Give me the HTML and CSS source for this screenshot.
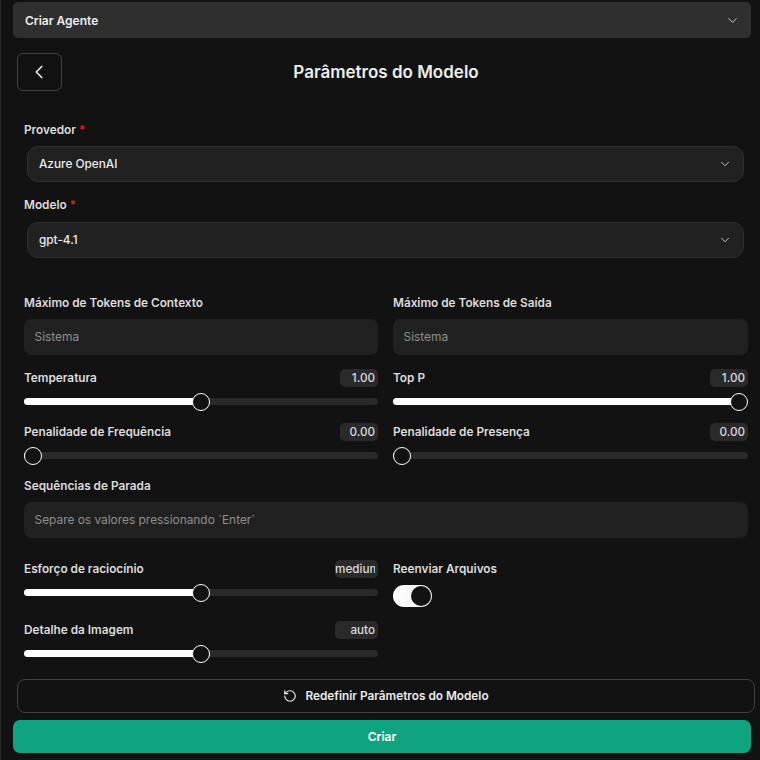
FILE: index.html
```html
<!DOCTYPE html>
<html lang="pt-BR">
<head>
    <meta charset="UTF-8">
    <meta name="viewport" content="width=device-width, initial-scale=1.0">
    <title>Parâmetros do Modelo</title>
    <link rel="stylesheet" href="styles.css">
</head>
<body>
    <div class="page">
        <div class="agent-bar">
            <span>Criar Agente</span>
            <svg class="chevron" viewBox="0 0 24 24"><path d="m6 9 6 6 6-6"/></svg>
        </div>

        <div class="panel">
            <div class="panel-header">
                <button class="back-button">
                    <svg class="back-icon" viewBox="0 0 24 24"><path d="m15 18-6-6 6-6"/></svg>
                </button>
                <div class="panel-title">Parâmetros do Modelo</div>
            </div>

            <div class="form">
                <div class="label label-first">Provedor <span class="required">*</span></div>
                <div class="select">
                    <span>Azure OpenAI</span>
                    <svg class="chevron" viewBox="0 0 24 24"><path d="m6 9 6 6 6-6"/></svg>
                </div>
                <div class="label label-second">Modelo <span class="required">*</span></div>
                <div class="select">
                    <span>gpt-4.1</span>
                    <svg class="chevron" viewBox="0 0 24 24"><path d="m6 9 6 6 6-6"/></svg>
                </div>

                <div class="params">
                    <div>
                        <div class="label">Máximo de Tokens de Contexto</div>
                        <div class="input">Sistema</div>
                    </div>
                    <div>
                        <div class="label">Máximo de Tokens de Saída</div>
                        <div class="input">Sistema</div>
                    </div>

                    <div class="param">
                        <div class="param-head">
                            <div class="label">Temperatura</div>
                            <div class="badge"><span>1.00</span></div>
                        </div>
                        <div class="slider" style="--value:0.5"><div class="slider-fill"></div><div class="slider-thumb"></div></div>
                    </div>
                    <div class="param">
                        <div class="param-head">
                            <div class="label">Top P</div>
                            <div class="badge"><span>1.00</span></div>
                        </div>
                        <div class="slider" style="--value:1"><div class="slider-fill"></div><div class="slider-thumb"></div></div>
                    </div>

                    <div class="param">
                        <div class="param-head">
                            <div class="label">Penalidade de Frequência</div>
                            <div class="badge"><span>0.00</span></div>
                        </div>
                        <div class="slider" style="--value:0"><div class="slider-fill"></div><div class="slider-thumb"></div></div>
                    </div>
                    <div class="param">
                        <div class="param-head">
                            <div class="label">Penalidade de Presença</div>
                            <div class="badge"><span>0.00</span></div>
                        </div>
                        <div class="slider" style="--value:0"><div class="slider-fill"></div><div class="slider-thumb"></div></div>
                    </div>

                    <div class="wide">
                        <div class="label">Sequências de Parada</div>
                        <div class="input">Separe os valores pressionando `Enter`</div>
                    </div>

                    <div class="param">
                        <div class="param-head">
                            <div class="label">Esforço de raciocínio</div>
                            <div class="badge badge-text"><span>medium</span></div>
                        </div>
                        <div class="slider" style="--value:0.5"><div class="slider-fill"></div><div class="slider-thumb"></div></div>
                    </div>
                    <div class="param-toggle">
                        <div class="param-head">
                            <div class="label">Reenviar Arquivos</div>
                        </div>
                        <div class="toggle"><div class="toggle-thumb"></div></div>
                    </div>

                    <div class="param">
                        <div class="param-head">
                            <div class="label">Detalhe da Imagem</div>
                            <div class="badge badge-text"><span>auto</span></div>
                        </div>
                        <div class="slider" style="--value:0.5"><div class="slider-fill"></div><div class="slider-thumb"></div></div>
                    </div>
                </div>
            </div>

            <button class="reset-button">
                <svg class="reset-icon" viewBox="0 0 24 24"><path d="M3 12a9 9 0 1 0 9-9 9.75 9.75 0 0 0-6.74 2.74L3 8"/><path d="M3 3v5h5"/></svg>
                Redefinir Parâmetros do Modelo
            </button>
        </div>

        <button class="create-button">Criar</button>
    </div>
</body>
</html>
```
FILE: styles.css
```css
* {
    box-sizing: border-box;
}
body {
    font-family: Inter, "Liberation Sans", sans-serif;
    background-color: #121212;
    color: #ececec;
    margin: 0;
    height: 760px;
    overflow: hidden;
    border-left: 1px solid #2a2a2a;
}
button {
    font-family: inherit;
    color: inherit;
    background: none;
    cursor: pointer;
}
svg {
    fill: none;
    stroke: currentColor;
    stroke-width: 2;
    stroke-linecap: round;
    stroke-linejoin: round;
    flex-shrink: 0;
}
.page {
    padding: 2px 9px 0 12px;
}
.agent-bar {
    display: flex;
    align-items: center;
    justify-content: space-between;
    height: 36px;
    padding: 0 11px 0 12px;
    background-color: #2f2f2f;
    border-radius: 5px;
    font-size: 12px;
    font-weight: 600;
}
.chevron {
    width: 14px;
    height: 14px;
    stroke-width: 1.6;
    color: #d0d0d0;
}
.agent-bar .chevron {
    width: 15px;
    height: 15px;
}
.panel {
    margin: 15px -4px 0 4px;
}
.panel-header {
    display: grid;
    grid-template-columns: 45px 1fr 45px;
    align-items: center;
}
.back-button {
    width: 45px;
    height: 38px;
    padding: 0 2px 0 0;
    border: 1px solid #424242;
    border-radius: 6px;
    display: flex;
    align-items: center;
    justify-content: center;
}
.back-icon {
    width: 22px;
    height: 22px;
    stroke-width: 1.8;
}
.panel-title {
    font-size: 17px;
    font-weight: 600;
    text-align: center;
}
.form {
    padding: 0 7px;
}
.label {
    height: 18px;
    line-height: 18px;
    font-size: 11.8px;
    font-weight: 600;
    color: #dcdcdc;
    white-space: nowrap;
}
.label-first {
    margin-top: 30px;
    margin-bottom: 7px;
}
.label-second {
    margin-top: 14px;
    margin-bottom: 8px;
}
.required {
    color: #dc2626;
}
.select {
    display: flex;
    align-items: center;
    justify-content: space-between;
    height: 36px;
    margin: 0 4px 0 3px;
    padding: 0 11px;
    background-color: #212121;
    border: 1px solid #2f2f2f;
    border-radius: 11px;
    font-size: 11.8px;
    font-weight: 500;
}
.params {
    display: grid;
    grid-template-columns: 354px 1fr;
    column-gap: 15px;
    row-gap: 14px;
    margin-top: 36px;
}
.params .label {
    margin-bottom: 7px;
}
.input {
    height: 36px;
    line-height: 36px;
    padding: 0 11px 0 10.5px;
    background-color: #212121;
    border-radius: 7px;
    font-size: 11.9px;
    color: #8e8e8e;
}
.wide {
    grid-column: 1 / 3;
    margin-bottom: 8px;
}
.param {
    padding-bottom: 4px;
}
.param-head {
    display: flex;
    justify-content: space-between;
    height: 18px;
    margin-bottom: 11px;
}
.param-head .label {
    margin-bottom: 0;
}
.badge {
    width: 38px;
    height: 18px;
    line-height: 18px;
    padding: 0 3px 0 0;
    background-color: #2a2a2a;
    border-radius: 5px;
    font-size: 11.7px;
    font-weight: 500;
    color: #dcdcdc;
    text-align: right;
}
.badge span {
    display: block;
    overflow: hidden;
    white-space: nowrap;
}
.badge-text {
    width: 43px;
}
.slider {
    position: relative;
    height: 7px;
    background-color: #2a2a2a;
    border-radius: 4px;
}
.slider-fill {
    height: 7px;
    width: calc(var(--value) * (100% - 18px) + 9px);
    background-color: #ffffff;
    border-radius: 4px;
}
.slider-thumb {
    position: absolute;
    top: -5.5px;
    left: calc(var(--value) * (100% - 18px));
    width: 18px;
    height: 18px;
    background-color: #121212;
    border: 1.5px solid #ffffff;
    border-radius: 50%;
}
.toggle {
    display: flex;
    justify-content: flex-end;
    align-items: center;
    width: 39px;
    height: 22px;
    margin-top: -4px;
    background: linear-gradient(90deg, #ffffff, #ececec);
    border-radius: 11px;
}
.toggle-thumb {
    width: 20px;
    height: 20px;
    margin-right: 1px;
    background-color: #121212;
    border-radius: 50%;
}
.reset-button {
    display: flex;
    align-items: center;
    justify-content: center;
    gap: 8px;
    width: 100%;
    height: 34px;
    margin-top: 18px;
    padding: 0;
    border: 1px solid #424242;
    border-radius: 8px;
    font-size: 11.8px;
    font-weight: 600;
}
.reset-icon {
    width: 14px;
    height: 14px;
    stroke-width: 2;
}
.create-button {
    display: block;
    width: 100%;
    height: 33px;
    margin-top: 7px;
    padding: 0 0 1px;
    border: none;
    border-radius: 7px;
    background-color: #10a37f;
    color: #ffffff;
    font-size: 12px;
    font-weight: 600;
}
```
